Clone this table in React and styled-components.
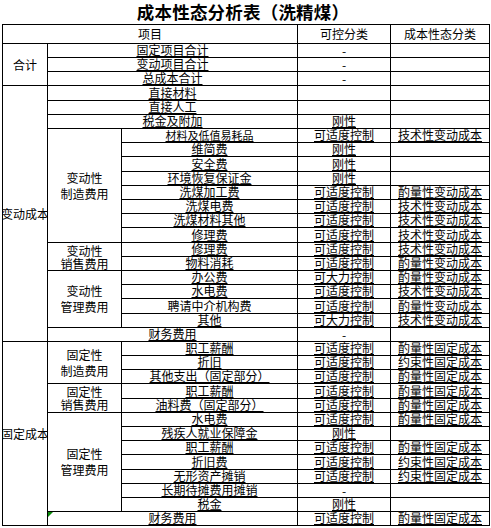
import React from "react";
import styled, { createGlobalStyle } from "styled-components";

const GlobalStyle = createGlobalStyle`
  html, body {
    margin: 0;
    padding: 0;
    background: #fff;
  }
  body {
    font-family: "Noto Sans CJK SC", "Liberation Sans", sans-serif;
    color: #000;
  }
`;

const Page = styled.div`
  width: 491px;
  height: 528px;
  overflow: hidden;
  padding-left: 2px;
  box-sizing: border-box;
`;

const Title = styled.h1`
  margin: 0;
  width: 488px;
  height: 24px;
  padding-right: 6px;
  box-sizing: border-box;
  text-align: center;
  font-size: 17.5px;
  line-height: 24px;
  font-weight: 700;
  letter-spacing: 0.2px;
`;

const Sheet = styled.div`
  display: grid;
  grid-template-columns: 45px 74px 176px 93px 99px;
  grid-template-rows: ${p => p.$rows};
  width: 488px;
  box-sizing: border-box;
  border-top: 1px solid #000;
  border-left: 1px solid #000;
`;

const Cell = styled.div`
  grid-row: ${p => p.$row} / span ${p => p.$rs || 1};
  grid-column: ${p => p.$col} / span ${p => p.$cs || 1};
  position: relative;
  min-width: 0;
  min-height: 0;
  display: flex;
  justify-content: center;
  align-items: ${p => (p.$mid ? "center" : "flex-end")};
  overflow: hidden;
  white-space: nowrap;
  border-right: 1px solid #000;
  border-bottom: 1px solid #000;
  font-size: ${p => p.$size || 12}px;
  line-height: 12px;
  padding-bottom: ${p => (p.$mid ? 0 : 1)}px;
  box-sizing: border-box;

  ${p => p.$flag && `
    &::before {
      content: "";
      position: absolute;
      top: 0;
      left: 0;
      border-top: 5px solid #0a8a0a;
      border-right: 5px solid transparent;
    }
  `}
`;

const HeadCell = styled(Cell)`
  padding-bottom: 3px;
`;

const Text = styled.span`
  text-decoration: ${p => (p.$u ? "underline" : "none")};
  text-decoration-thickness: 1px;
  text-underline-offset: 1px;
`;

const GroupLabel = styled.span`
  text-align: center;
  line-height: ${p => (p.$tight ? 13 : 16)}px;
  white-space: pre-line;
`;

const items = [
  { name: "固定项目合计", wide: true, ctrl: "-" },
  { name: "变动项目合计", wide: true, ctrl: "-" },
  { name: "总成本合计", wide: true, ctrl: "-" },
  { name: "直接材料", wide: true },
  { name: "直接人工", wide: true },
  { name: "税金及附加", wide: true, ctrl: "刚性" },
  { name: "材料及低值易耗品", ctrl: "可适度控制", kind: "技术性变动成本", size: 11 },
  { name: "维简费", ctrl: "刚性" },
  { name: "安全费", ctrl: "刚性" },
  { name: "环境恢复保证金", ctrl: "刚性" },
  { name: "洗煤加工费", ctrl: "可适度控制", kind: "酌量性变动成本" },
  { name: "洗煤电费", ctrl: "可适度控制", kind: "技术性变动成本" },
  { name: "洗煤材料其他", ctrl: "可适度控制", kind: "技术性变动成本" },
  { name: "修理费", ctrl: "可适度控制", kind: "技术性变动成本" },
  { name: "修理费", ctrl: "可适度控制", kind: "技术性变动成本" },
  { name: "物料消耗", ctrl: "可适度控制", kind: "酌量性变动成本" },
  { name: "办公费", ctrl: "可大力控制", kind: "酌量性变动成本" },
  { name: "水电费", ctrl: "可适度控制", kind: "技术性变动成本" },
  { name: "聘请中介机构费", ctrl: "可适度控制", kind: "酌量性变动成本", plain: true },
  { name: "其他", ctrl: "可大力控制", kind: "技术性变动成本" },
  { name: "财务费用", wide: true, ctrl: "-" },
  { name: "职工薪酬", ctrl: "可适度控制", kind: "酌量性固定成本" },
  { name: "折旧", ctrl: "可适度控制", kind: "约束性固定成本" },
  { name: "其他支出（固定部分）", ctrl: "可适度控制", kind: "酌量性固定成本" },
  { name: "职工薪酬", ctrl: "可适度控制", kind: "酌量性固定成本" },
  { name: "油料费（固定部分）", ctrl: "可适度控制", kind: "酌量性固定成本" },
  { name: "水电费", ctrl: "可适度控制", kind: "酌量性固定成本" },
  { name: "残疾人就业保障金", ctrl: "刚性" },
  { name: "职工薪酬", ctrl: "可适度控制", kind: "酌量性固定成本" },
  { name: "折旧费", ctrl: "可适度控制", kind: "约束性固定成本" },
  { name: "无形资产摊销", ctrl: "可适度控制", kind: "约束性固定成本" },
  { name: "长期待摊费用摊销", ctrl: "-" },
  { name: "税金", ctrl: "刚性" },
  { name: "财务费用", wide: true, ctrl: "可适度控制", kind: "酌量性固定成本", flag: true },
];

// first column: big cost blocks (start = data row, 1-based)
const blocks = [
  { start: 1, span: 3, label: "合计" },
  { start: 4, span: 18, label: "变动成本" },
  { start: 22, span: 13, label: "固定成本" },
];

// second column: expense groups
const groups = [
  { start: 7, span: 8, label: "变动性\n制造费用" },
  { start: 15, span: 2, label: "变动性\n销售费用" },
  { start: 17, span: 4, label: "变动性\n管理费用" },
  { start: 22, span: 3, label: "固定性\n制造费用" },
  { start: 25, span: 2, label: "固定性\n销售费用" },
  { start: 27, span: 7, label: "固定性\n管理费用" },
];

// sheet rows are a bit over 14px each, so lines fall on 14/15px steps
const lines = [43];
for (let k = 1; k <= items.length; k++) lines.push(Math.floor(43.4 + k * 14.19));
const rowSizes = "19px " + lines.slice(1).map((y, i) => `${y - lines[i]}px`).join(" ");

function App() {
  return (
    <Page>
      <GlobalStyle />
      <Title>成本性态分析表（洗精煤）</Title>
      <Sheet $rows={rowSizes}>
        <HeadCell $row={1} $col={1} $cs={3}>项目</HeadCell>
        <HeadCell $row={1} $col={4}>可控分类</HeadCell>
        <HeadCell $row={1} $col={5}>成本性态分类</HeadCell>

        {blocks.map(b => (
          <Cell key={b.label} $row={b.start + 1} $rs={b.span} $col={1} $mid>
            {b.label}
          </Cell>
        ))}

        {groups.map(g => (
          <Cell key={g.start} $row={g.start + 1} $rs={g.span} $col={2} $mid>
            <GroupLabel $tight={g.span < 3}>{g.label}</GroupLabel>
          </Cell>
        ))}

        {items.map((it, i) => {
          const row = i + 2;
          const dash = it.ctrl === "-";
          return (
            <React.Fragment key={i}>
              <Cell
                $row={row}
                $col={it.wide ? 2 : 3}
                $cs={it.wide ? 2 : 1}
                $size={it.size}
                $flag={it.flag}
              >
                <Text $u={!it.plain}>{it.name}</Text>
              </Cell>
              <Cell $row={row} $col={4} $mid={dash}>
                {it.ctrl && <Text $u={!dash}>{it.ctrl}</Text>}
              </Cell>
              <Cell $row={row} $col={5}>
                {it.kind && <Text $u>{it.kind}</Text>}
              </Cell>
            </React.Fragment>
          );
        })}
      </Sheet>
    </Page>
  );
}

export default App;
